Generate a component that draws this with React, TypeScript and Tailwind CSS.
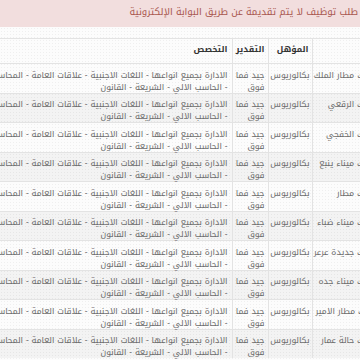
const rows = [
  "جمرك مطار الملك",
  "جمرك الرقعي",
  "جمرك الخفجي",
  "جمرك ميناء ينبع",
  "جمرك مطار",
  "جمرك ميناء ضباء",
  "جمرك جديدة عرعر",
  "جمرك ميناء جده",
  "جمرك مطار الامير",
  "جمرك حالة عمار",
];

const App = () => (
  <div
    dir="rtl"
    className="w-[360px] h-[360px] overflow-hidden bg-[#fcfcfc] bg-[radial-gradient(#efefef_0.6px,transparent_0.8px)] bg-[length:3px_3px] text-[8.5px] leading-[12px]"
    style={{ fontFamily: '"Noto Kufi Arabic", "Noto Sans Arabic", "DejaVu Sans Condensed", "DejaVu Sans", sans-serif' }}
  >
    <div className="h-[27px] bg-[#f2dede] text-[#a9574f] text-[9.6px] leading-[13px] pr-[2px] pt-[6px] whitespace-nowrap">
      طلب توظيف لا يتم تقديمة عن طريق البوابة الإلكترونية
    </div>
    <div className="mt-[11px] w-[480px] -mr-[25px]">
      <table className="w-full table-fixed border-collapse">
        <thead>
          <tr className="text-[#333] font-bold border-t border-[#e3e3e3]">
            <th className="w-[73px] border-l border-[#e3e3e3]" />
            <th className="w-[44px] px-[3px] pt-[3.5px] pb-[8.5px] text-right border-l border-[#e3e3e3] whitespace-nowrap overflow-hidden">المؤهل</th>
            <th className="w-[36px] px-[3px] pt-[3.5px] pb-[8.5px] text-right border-l border-[#e3e3e3] whitespace-nowrap overflow-hidden">التقدير</th>
            <th className="px-[4px] pt-[3.5px] pb-[8.5px] text-right">التخصص</th>
          </tr>
        </thead>
        <tbody className="text-[#6b6b6b]">
          {rows.map((r, i) => (
            <tr key={i} className={`border-t border-[#e3e3e3] align-top ${i % 2 ? "bg-black/[0.035]" : ""}`}>
              <td className="pr-[8px] pl-[4px] pt-[4.5px] text-right border-l border-[#e3e3e3] whitespace-nowrap overflow-hidden">{r}</td>
              <td className="px-[2px] pt-[4.5px] text-right border-l border-[#e3e3e3] whitespace-nowrap overflow-hidden">بكالوريوس</td>
              <td className="px-[3px] pt-[4.5px] text-right border-l border-[#e3e3e3] whitespace-nowrap overflow-hidden">
                جيد فما
                <br />
                فوق
              </td>
              <td className="px-[4px] pt-[4.5px] text-right whitespace-nowrap">
                الادارة بجميع انواعها - اللغات الاجنبية - علاقات العامة - المحاسبة
                <br />
                - الحاسب الالي - الشريعة - القانون
              </td>
            </tr>
          ))}
        </tbody>
      </table>
    </div>
  </div>
);

export default App;
